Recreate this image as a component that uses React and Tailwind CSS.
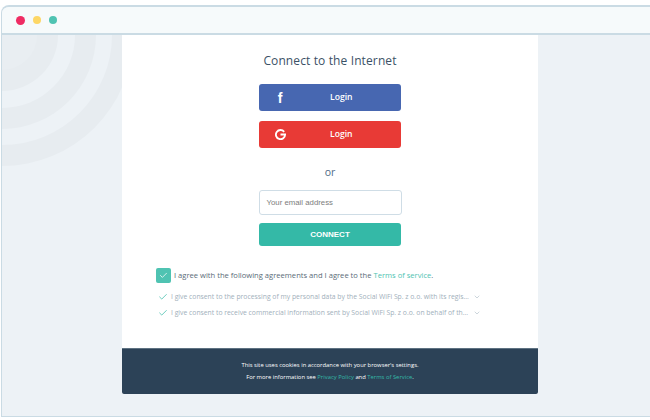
import React from "react";
import { Check, ChevronDown } from "lucide-react";

function Arcs() {
  return (
    <svg className="absolute left-0 top-0" width="122" height="135" viewBox="0 0 122 135">
      <circle cx="0" cy="0" r="131" fill="#e7ecf0" />
      <circle cx="0" cy="0" r="110" fill="#edf2f6" />
      <circle cx="0" cy="0" r="94" fill="#e7ecf0" />
      <circle cx="0" cy="0" r="73" fill="#edf2f6" />
      <circle cx="0" cy="0" r="56" fill="#e7ecf0" />
      <circle cx="0" cy="0" r="35" fill="#e9eef2" />
    </svg>
  );
}

function GoogleG() {
  return (
    <svg width="11" height="11" viewBox="0 0 24 24" fill="none" stroke="#fff" strokeWidth="4">
      <path d="M20 6.2A10 10 0 1 0 22 12H12" />
    </svg>
  );
}

function SocialButton({ color, icon, className }) {
  return (
    <button className={`flex items-center w-[142px] h-[27px] rounded-[3px] text-white text-[8.6px] font-semibold ${color} ${className}`}>
      <span className="flex items-center justify-center w-[42px]">{icon}</span>
      <span className="ml-[29px]">Login</span>
    </button>
  );
}

function Consent({ text }) {
  return (
    <div className="flex items-center h-[16px]">
      <Check size={10} strokeWidth={2} className="text-[#4fc3b2] ml-[36px] mr-[3px] shrink-0" />
      <span className="text-[6.8px] text-[#9fb0bb] w-[302px] whitespace-nowrap leading-none">{text}</span>
      <ChevronDown size={8} strokeWidth={2} className="text-[#b4c1ca]" />
    </div>
  );
}

export default function App() {
  return (
    <div className="w-[650px] h-[420px] bg-white overflow-hidden pt-[5px] font-['Open_Sans',sans-serif]">
      <div className="flex flex-col w-[660px] h-[412px] ml-px border-2 border-[#cadbe4] border-r-0 rounded-tl-[8px] border-l border-b overflow-hidden bg-[#edf2f6]">
        <div className="flex items-center gap-[8px] h-[28px] pl-[14px] shrink-0 bg-[#f6fafb] border-b-2 border-[#cadbe4]">
          <span className="w-[9px] h-[9px] rounded-full bg-[#ef2c63]" />
          <span className="w-[8px] h-[8px] rounded-full bg-[#fdd766]" />
          <span className="w-[8px] h-[8px] rounded-full bg-[#4fc3b2]" />
        </div>
        <div className="relative flex-1">
          <Arcs />
          <div className="relative flex flex-col w-[416px] h-[359px] ml-[120px] bg-white">
            <div className="flex flex-col items-center flex-1">
              <h1 className="mt-[16px] text-[12px] leading-[20px] tracking-[0.12px] text-[#3b5166]">Connect to the Internet</h1>
              <SocialButton
                color="bg-[#4767b1]"
                className="mt-[13px]"
                icon={<span className="font-['Liberation_Sans',sans-serif] font-bold text-[14px] leading-none">f</span>}
              />
              <SocialButton color="bg-[#e83a36]" className="mt-[10px]" icon={<GoogleG />} />
              <div className="mt-[14px] text-[10.5px] leading-[20px] text-[#4f6b87]">or</div>
              <div className="flex items-center mt-[8px] w-[143px] h-[25px] pl-[7px] rounded-[3px] border border-[#cfdde6] bg-white font-['Liberation_Sans',sans-serif] text-[7.8px] text-[#7d7d7d]">
                Your email address
              </div>
              <button className="mt-[8px] w-[142px] h-[23px] rounded-[3px] bg-[#34b9a7] text-white font-['Liberation_Sans',sans-serif] font-bold text-[8px]">
                CONNECT
              </button>
              <div className="flex flex-col self-stretch mt-[21px]">
                <div className="flex items-center h-[17px] pl-[34px]">
                  <span className="flex items-center justify-center w-[15px] h-[15px] rounded-[2px] bg-[#4fc3b2] shrink-0">
                    <Check size={9} strokeWidth={2} className="text-white" />
                  </span>
                  <span className="ml-[3px] text-[7.6px] text-[#5a6b78] whitespace-nowrap">
                    I agree with the following agreements and I agree to the <span className="text-[#4fc3b2]">Terms of service</span>.
                  </span>
                </div>
                <div className="mt-[5px]">
                  <Consent text="I give consent to the processing of my personal data by the Social WiFi Sp. z o.o. with its regis..." />
                  <Consent text="I give consent to receive commercial information sent by Social WiFi Sp. z o.o. on behalf of th..." />
                </div>
              </div>
            </div>
            <div className="flex flex-col items-center justify-center gap-[3px] h-[46px] rounded-b-[2px] border-t border-[#5e7282] bg-[#2c4257] text-[5.85px] leading-[9px] text-white">
              <div>This site uses cookies in accordance with your browser's settings.</div>
              <div>
                For more information see <span className="text-[#34b9a7]">Privacy Policy</span> and <span className="text-[#34b9a7]">Terms of Service</span>.
              </div>
            </div>
          </div>
        </div>
      </div>
    </div>
  );
}
